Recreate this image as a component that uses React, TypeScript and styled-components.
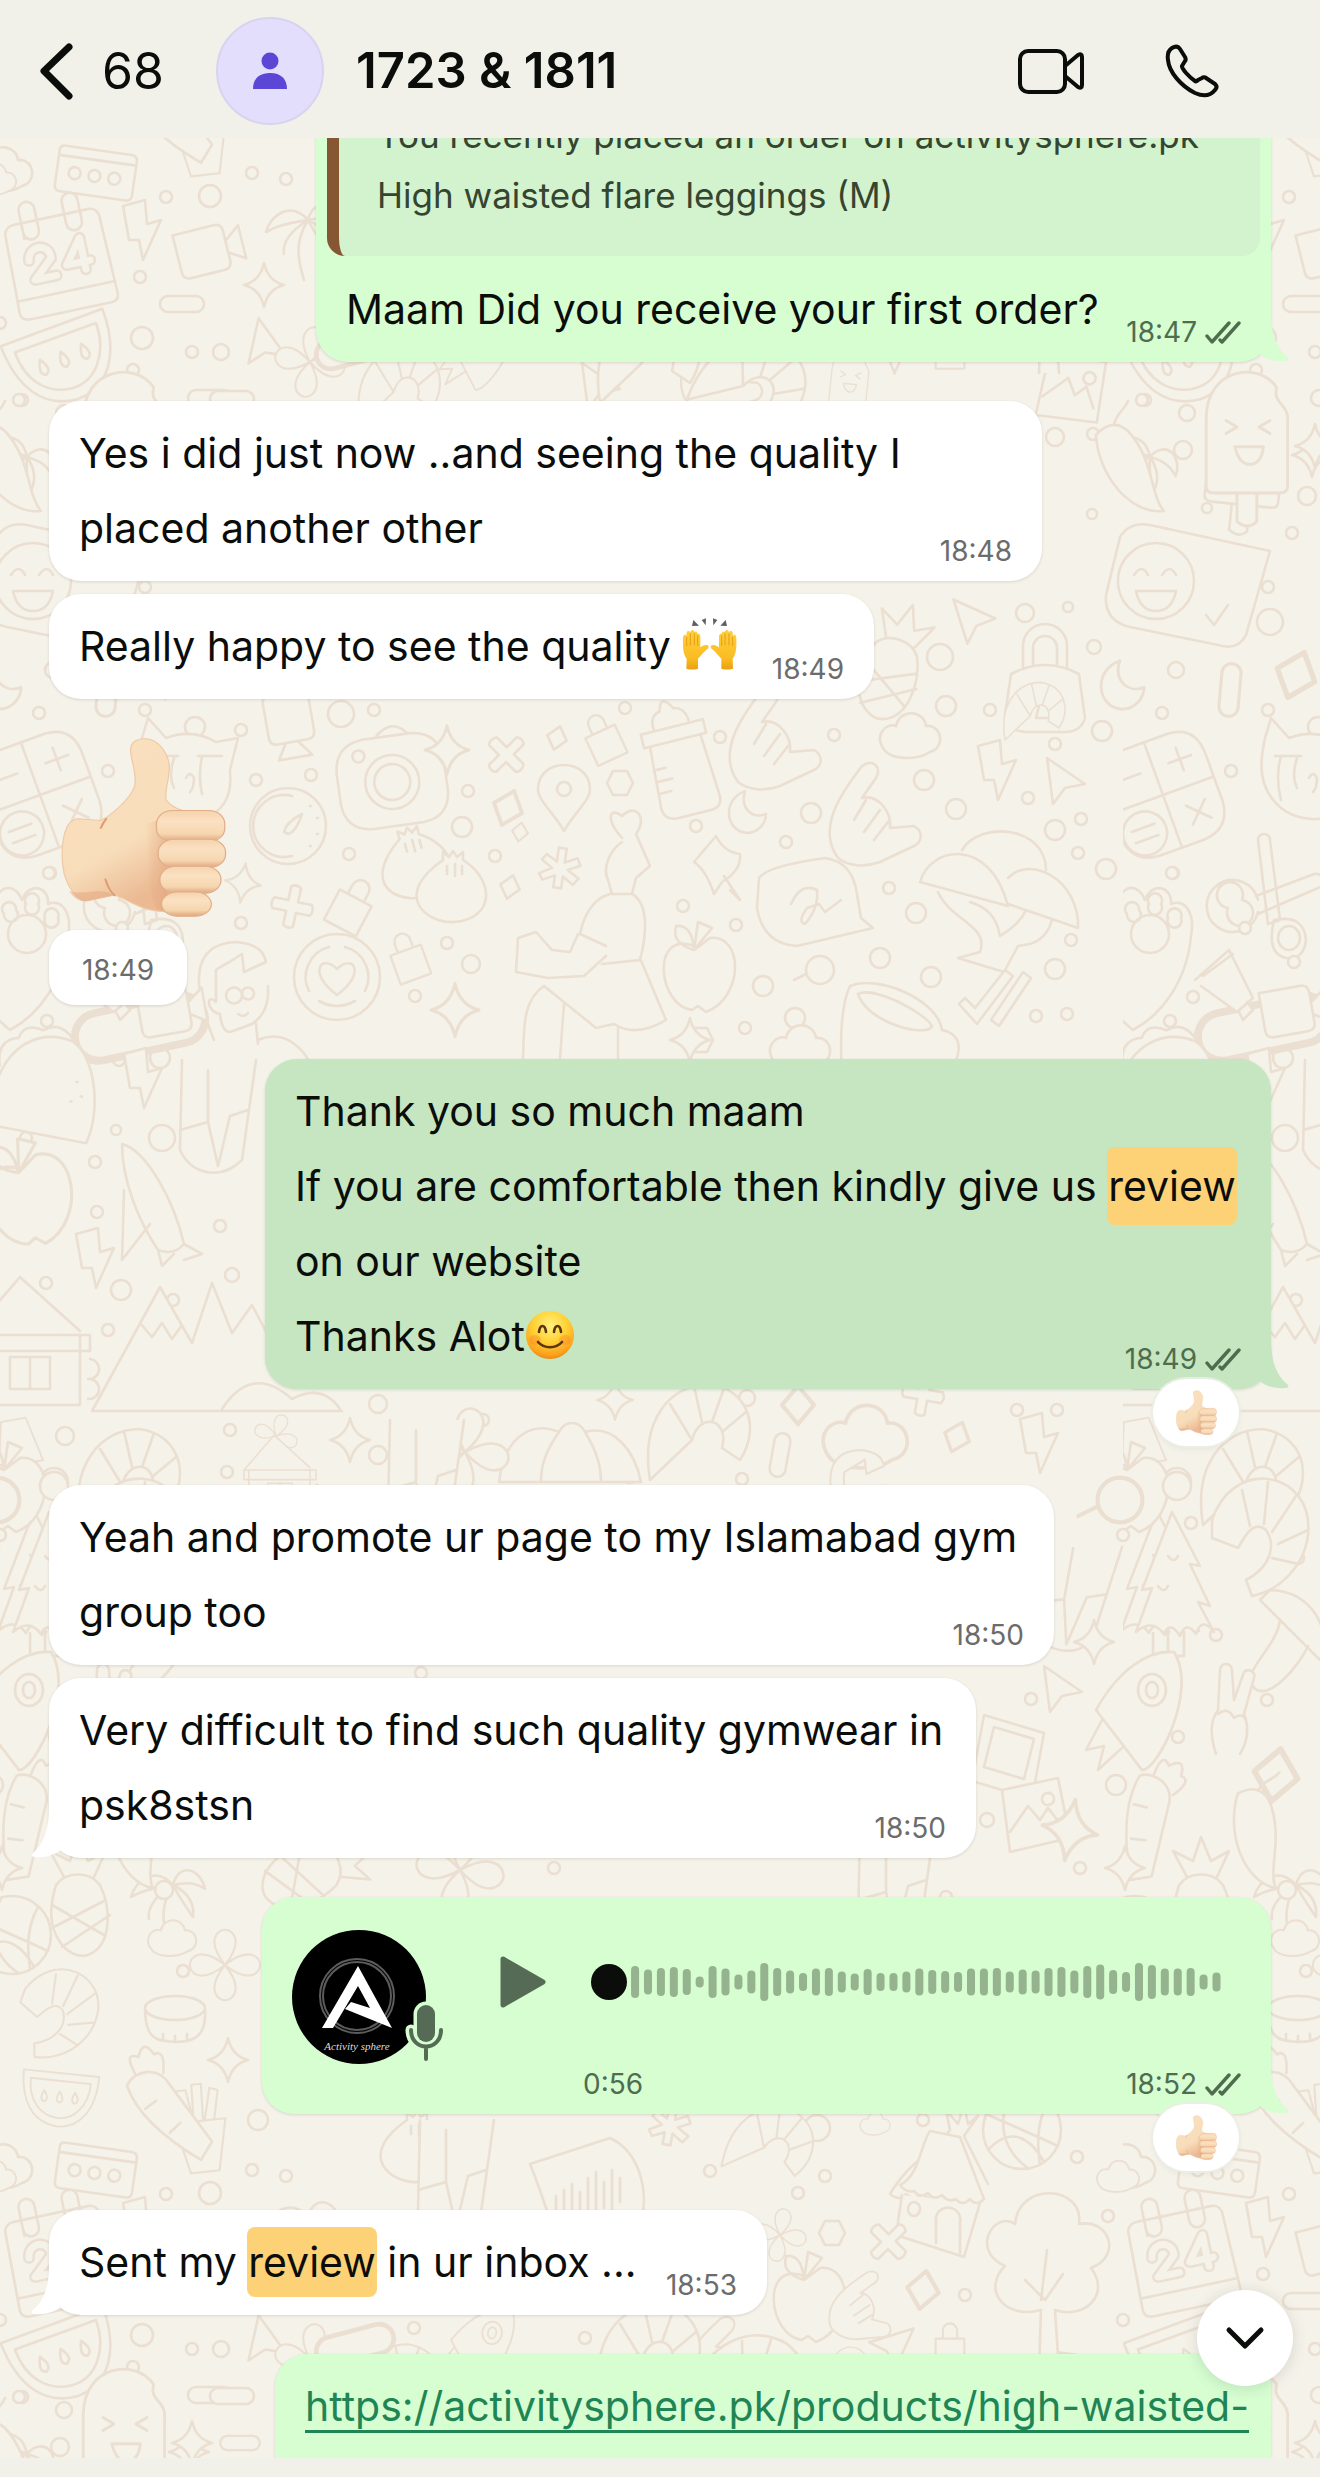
import React from "react";
import styled, { createGlobalStyle, css } from "styled-components";

const GlobalStyle = createGlobalStyle`
  *, *::before, *::after { box-sizing: border-box; }
  body { margin: 0; background: #f4f2e9; }
  button { border: 0; padding: 0; background: none; color: inherit; font: inherit; cursor: pointer; }
`;

const color = {
  wall: "#f4f2e9",
  doodle: "#ebdfd1",
  bar: "#f1f1ea",
  ink: "#0b0d0a",
  white: "#ffffff",
  green: "#d6fed1",
  selected: "#c5e6c0",
  quote: "#d3f3ce",
  mark: "#fdd176",
  link: "#1f8555",
  metaIn: "#6c6c6c",
  metaOut: "#4f6d4e",
};

/* ---------- page frame ---------- */

const Screen = styled.div`
  position: relative;
  display: flex;
  flex-direction: column;
  height: 100vh;
  overflow: hidden;
  background: ${color.wall};
  color: ${color.ink};
  font-family: Inter, "Liberation Sans", sans-serif;
`;

const Wallpaper = styled.svg`
  position: absolute;
  inset: 0;
  width: 100%;
  height: 100%;
`;

const Header = styled.header`
  position: relative;
  z-index: 1;
  flex: none;
  display: flex;
  align-items: center;
  height: 138px;
  padding: 4px 101px 0 39px;
  background: ${color.bar};
`;

const BackButton = styled.button`
  display: flex;
  align-items: center;
  gap: 28px;
  width: 177px;
  font-size: 50px;
  line-height: 60px;
`;

const Avatar = styled.div`
  display: flex;
  align-items: center;
  justify-content: center;
  width: 108px;
  height: 108px;
  border: 2px solid #d8d3ee;
  border-radius: 50%;
  background: #e4defd;
`;

const Title = styled.h1`
  flex: 1;
  margin: 0 0 0 32px;
  font-size: 49px;
  font-weight: 600;
  line-height: 60px;
`;

const HeaderActions = styled.nav`
  display: flex;
  align-items: center;
  gap: 80px;
`;

const IconButton = styled.button`
  display: flex;
`;

const Chat = styled.main`
  position: relative;
  flex: 1;
  min-height: 0;
  overflow: hidden;
`;

const MessageList = styled.div`
  display: flex;
  flex-direction: column;
  margin-top: -58px;
  padding: 0 49px;
`;

const Composer = styled.footer`
  position: relative;
  flex: none;
  height: 19px;
  background: ${color.bar};
`;

/* ---------- messages ---------- */

type Side = "in" | "out";

const Row = styled.div<{ $side: Side; $gap?: number }>`
  display: flex;
  flex-direction: column;
  align-items: ${(p) => (p.$side === "in" ? "flex-start" : "flex-end")};
  margin-top: ${(p) => p.$gap ?? 39}px;
`;

const Bubble = styled.article<{ $side: Side; $width: number; $selected?: boolean; $tall?: boolean }>`
  position: relative;
  display: flex;
  flex-direction: column;
  width: ${(p) => p.$width}px;
  max-width: 100%;
  min-height: ${(p) => (p.$tall ? 180 : 105)}px;
  padding: 15px 30px;
  border-radius: 32px;
  background: ${(p) => (p.$selected ? color.selected : p.$side === "in" ? color.white : color.green)};
  box-shadow: 0 1px 3px rgba(60, 50, 30, 0.14);
  --tail: ${(p) => (p.$selected ? color.selected : p.$side === "in" ? color.white : color.green)};
`;

const TailSvg = styled.svg<{ $side: Side }>`
  position: absolute;
  bottom: 0;
  ${(p) =>
    p.$side === "out"
      ? css`
          right: -18px;
        `
      : css`
          left: -18px;
          transform: scaleX(-1);
        `}
  fill: var(--tail);
`;

const Text = styled.p`
  margin: 0;
  font-size: 41px;
  line-height: 75px;
`;

const Mark = styled.mark<{ $pad: number }>`
  margin: 0 -1px;
  padding: ${(p) => p.$pad}px 1px;
  border-radius: 8px;
  background: ${color.mark};
  color: inherit;
`;

const Link = styled.a`
  color: ${color.link};
  white-space: nowrap;
  text-decoration: underline;
  text-decoration-thickness: 3px;
  text-underline-offset: 9px;
  text-decoration-skip-ink: none;
`;

const MetaLine = styled.div<{ $side: Side }>`
  display: flex;
  align-items: center;
  align-self: flex-end;
  gap: 8px;
  height: 30px;
  margin-top: -30px;
  color: ${(p) => (p.$side === "in" ? color.metaIn : color.metaOut)};
  font-size: 28px;
  line-height: 30px;
`;

const Quote = styled.blockquote`
  margin: 0 -19px 16px;
  padding: 10px 38px 31px;
  border-left: 12px solid #875733;
  border-radius: 18px;
  background: ${color.quote};
  color: #35452f;
  font-size: 35px;
  line-height: 60px;
`;

const TimePill = styled.div`
  display: flex;
  align-items: center;
  justify-content: center;
  width: 138px;
  height: 75px;
  margin-top: 13px;
  padding-top: 4px;
  border-radius: 26px;
  background: ${color.white};
  color: ${color.metaIn};
  box-shadow: 0 1px 3px rgba(60, 50, 30, 0.16);
  font-size: 28px;
`;

const StickerBox = styled.div`
  height: 179px;
  padding-left: 12px;
`;

const Reaction = styled.button`
  position: relative;
  display: flex;
  align-items: center;
  justify-content: center;
  width: 86px;
  height: 67px;
  margin: -10px 32px 0 0;
  border-radius: 34px;
  background: ${color.white};
  box-shadow: 0 0 0 2px rgba(235, 238, 228, 0.9), 0 3px 6px rgba(0, 0, 0, 0.06);
`;

const InlineEmoji = styled.svg`
  vertical-align: -9px;
`;

/* ---------- voice message ---------- */

const VoiceBody = styled.div`
  display: flex;
  gap: 53px;
  padding-top: 17px;
`;

const Player = styled.div`
  flex: 1;
  display: flex;
  flex-direction: column;
  gap: 34px;
`;

const Controls = styled.div`
  display: flex;
  align-items: center;
  gap: 45px;
  height: 106px;
`;

const Track = styled.div`
  flex: 1;
  display: grid;
  align-items: center;
  margin-right: 20px;
  > * {
    grid-area: 1 / 1;
  }
`;

const Seek = styled.input`
  appearance: none;
  width: 100%;
  height: 38px;
  margin: 0;
  background: transparent;
  &::-webkit-slider-thumb {
    appearance: none;
    width: 36px;
    height: 36px;
    border-radius: 50%;
    background: ${color.ink};
  }
`;

const VoiceFoot = styled.div`
  display: flex;
  justify-content: space-between;
  height: 30px;
  padding-left: 83px;
  color: ${color.metaOut};
  font-size: 28px;
  line-height: 30px;
`;

const FootMeta = styled.span`
  display: flex;
  align-items: center;
  gap: 8px;
`;

const ScrollDown = styled.button`
  position: absolute;
  right: 27px;
  bottom: 72px;
  display: flex;
  align-items: center;
  justify-content: center;
  width: 96px;
  height: 96px;
  border-radius: 50%;
  background: ${color.white};
  box-shadow: 0 2px 16px rgba(0, 0, 0, 0.12);
`;

/* ---------- small drawings ---------- */

const Tail = ({ side }: { side: Side }) => (
  <TailSvg $side={side} width="50" height="52" viewBox="0 0 50 52" aria-hidden="true">
    <path d="M32 2 C32 24 37 38 49 48 C50 50 49 51 46 51 C36 52 26 49 19 43 L8 30 L20 2 Z" />
  </TailSvg>
);

const Ticks = () => (
  <svg width="36" height="23" viewBox="0 0 36 23" fill="none" stroke="currentColor" strokeWidth="3.4" strokeLinecap="round" strokeLinejoin="round" aria-hidden="true">
    <path d="M2 15 L7 21 L24 2" />
    <path d="M15 19 L17 21 L34 2" />
  </svg>
);

const Meta = ({ side, time }: { side: Side; time: string }) => (
  <MetaLine $side={side}>
    <time>{time}</time>
    {side === "out" && <Ticks />}
  </MetaLine>
);

const ThumbsUp = ({ width, height }: { width: number; height: number }) => {
  const fingers = [
    [374, 332, 163, 94],
    [378, 419, 161, 85],
    [382, 500, 146, 82],
    [386, 578, 119, 73],
  ];
  return (
    <svg width={width} height={height} viewBox="0 0 166 180" role="img" aria-label="thumbs up">
      <defs>
        <linearGradient id="palm" x1="0" y1="0" x2="0.4" y2="1">
          <stop offset="0" stopColor="#fbe0bf" />
          <stop offset="0.7" stopColor="#f8ddbb" />
          <stop offset="1" stopColor="#ebba93" />
        </linearGradient>
        <linearGradient id="finger" x1="0" y1="0" x2="0" y2="1">
          <stop offset="0" stopColor="#f5d3ad" />
          <stop offset="0.35" stopColor="#fbe1c2" />
          <stop offset="0.75" stopColor="#f6d6b0" />
          <stop offset="1" stopColor="#dfa67f" />
        </linearGradient>
        <linearGradient id="fold" x1="0" y1="0" x2="1" y2="0">
          <stop offset="0" stopColor="#e5a67d" stopOpacity="0" />
          <stop offset="1" stopColor="#dd9d77" stopOpacity="0.5" />
        </linearGradient>
      </defs>
      <g transform="scale(0.421 0.333) translate(-147 -113)">
        <path
          d="M188 357 L240 362 C262 350 310 300 322 258 C328 220 312 175 312 150 C312 125 328 114 348 115 C375 116 398 150 404 190 C408 230 392 270 397 300 C410 322 430 330 450 338 L450 640 C400 640 370 637 345 627 C310 612 290 590 272 588 L207 605 C190 608 165 575 153 520 C145 470 148 400 165 372 C172 362 180 357 188 357 Z"
          fill="url(#palm)"
          stroke="#efc9a3"
          strokeWidth="3"
        />
        <path d="M345 375 C362 440 345 560 374 632 L400 638 L400 350 Z" fill="url(#fold)" />
        <path d="M252 540 C258 565 264 578 274 588 M241 385 C244 376 247 368 254 357" fill="none" stroke="#dc9d72" strokeWidth="5" strokeLinecap="round" />
        <path d="M165 575 C178 598 190 608 207 605 L272 588 C240 560 200 590 165 575 Z" fill="#e0a27a" opacity="0.45" />
        {fingers.map(([x, y, w, h]) => (
          <rect key={y} x={x} y={y} width={w} height={h} rx="38" ry="40" fill="url(#finger)" stroke="#e2ae87" strokeWidth="3" />
        ))}
      </g>
    </svg>
  );
};

const RaisedHands = () => (
  <InlineEmoji width="56" height="52" viewBox="66 38 168 156" role="img" aria-label="raised hands">
    <defs>
      <linearGradient id="hands" x1="0" y1="0" x2="0" y2="1">
        <stop offset="0" stopColor="#ffcf3d" />
        <stop offset="0.7" stopColor="#fbbd22" />
        <stop offset="1" stopColor="#e9a013" />
      </linearGradient>
      <g id="hand">
        <path
          d="M79 190 L80 160 C70 145 68 130 69 98 C69 86 78 86 79 94 L80 82 C81 74 90 76 91 82 C92 72 102 72 103 80 C106 76 113 79 113 86 C118 84 121 89 121 94 L121 126 C128 120 136 117 143 120 C149 124 145 129 141 132 C131 140 122 152 114 160 L114 190 Q97 195 79 190 Z"
          fill="url(#hands)"
        />
        <path d="M80 94 V122 M91 84 V120 M103 84 V120 M113 90 V122" stroke="#dd9510" strokeWidth="2.5" fill="none" />
      </g>
    </defs>
    <g fill="#5f6062">
      <path d="M100 44 L117 61 L96 62 Z M125 44 L138 39 L137 60 Z M159 39 L172 44 L160 60 Z M197 44 L201 62 L181 61 Z" />
    </g>
    <use href="#hand" />
    <use href="#hand" transform="translate(298 0) scale(-1 1)" />
  </InlineEmoji>
);

const Smile = () => (
  <InlineEmoji width="50" height="50" viewBox="0 0 50 50" role="img" aria-label="smiling face">
    <defs>
      <radialGradient id="face" cx="0.5" cy="0.3" r="0.72">
        <stop offset="0" stopColor="#fff27a" />
        <stop offset="0.5" stopColor="#ffd035" />
        <stop offset="0.85" stopColor="#fba21c" />
        <stop offset="1" stopColor="#e98411" />
      </radialGradient>
    </defs>
    <circle cx="25" cy="25" r="24" fill="url(#face)" />
    <ellipse cx="10" cy="30" rx="6" ry="5" fill="#fb7a2c" opacity="0.35" />
    <ellipse cx="40" cy="30" rx="6" ry="5" fill="#fb7a2c" opacity="0.35" />
    <g fill="none" stroke="#5b3410" strokeWidth="2.6" strokeLinecap="round">
      <path d="M14 22 C15 14 20 14 21 22 M29 22 C30 14 35 14 36 22" />
      <path d="M13 32 C19 39 31 39 37 32" />
    </g>
  </InlineEmoji>
);

const VoiceAvatar = () => (
  <svg width="155" height="136" viewBox="0 0 155 136" role="img" aria-label="Voice message sender">
    <circle cx="67" cy="68" r="67" fill="#000" />
    <g fill="none" stroke="#5c5c5c" strokeWidth="2">
      <circle cx="65" cy="67" r="37" />
      <circle cx="65" cy="67" r="34" />
    </g>
    <path d="M66 37 L100 99 L53 80 L59 73 L78 79 L66 57 L41 99 L30 99 Z" fill="#fff" />
    <text x="65" y="121" textAnchor="middle" fill="#ddd" fontFamily="'Liberation Serif', serif" fontStyle="italic" fontSize="11">
      Activity sphere
    </text>
    <g fill="none" strokeLinecap="round">
      <path d="M134 85 V104 M119 101 C119 122 149 122 149 101" stroke={color.green} strokeWidth="11" />
      <path d="M134 85 V104" stroke={color.green} strokeWidth="25" />
      <path d="M134 85 V104" stroke="#566b55" strokeWidth="18" />
      <path d="M119 101 C119 123 149 123 149 101 M134 118 V130" stroke="#566b55" strokeWidth="4" />
    </g>
  </svg>
);

const levels = [
  32, 25, 28, 30, 26, 11, 32, 27, 15, 23, 38, 28, 23, 18, 27, 28, 21, 17, 26, 18, 18, 21, 27, 24, 22, 20, 27, 27, 28, 21,
  25, 23, 28, 30, 23, 32, 35, 24, 20, 38, 34, 27, 27, 28, 15, 19,
];

const Waveform = () => (
  <svg width="100%" height="38" viewBox="0 0 629 38" preserveAspectRatio="none" aria-hidden="true">
    {levels.map((h, i) => (
      <rect key={i} x={40 + i * 12.9} y={19 - h / 2} width="8" height={h} rx="4" fill="#96b38f" />
    ))}
  </svg>
);

/* ---------- wallpaper doodles ---------- */

type Spot = [number, number, number];

const dots: Spot[] = [
  [166, 197, 6], [210, 196, 11], [252, 173, 6], [140, 277, 6], [142, 338, 11], [192, 352, 6], [221, 352, 8], [133, 370, 6],
  [22, 400, 6], [60, 380, 5], [1187, 413, 8], [1142, 400, 6], [1055, 437, 9], [1093, 434, 6], [1183, 450, 9], [1207, 508, 5],
  [1092, 514, 5], [1292, 533, 6], [1307, 496, 9], [1268, 587, 6], [1270, 622, 13], [1025, 613, 9], [1068, 607, 5],
  [940, 657, 13], [1094, 647, 7], [1176, 670, 8], [39, 713, 6], [145, 710, 6], [195, 727, 10], [241, 730, 6], [341, 714, 13],
  [374, 710, 6], [108, 771, 6], [256, 780, 6], [311, 775, 6], [468, 791, 6], [462, 827, 10], [349, 854, 6], [495, 856, 6],
  [50, 873, 6], [241, 923, 6], [447, 943, 6], [471, 964, 9], [415, 996, 6], [47, 1021, 6], [625, 708, 6], [720, 737, 6],
  [834, 735, 6], [946, 706, 10], [990, 710, 6], [1102, 731, 10], [1055, 744, 6], [811, 813, 10], [924, 780, 10],
  [956, 809, 10], [1028, 798, 6], [1081, 819, 6], [1055, 830, 10], [1078, 853, 6], [1106, 869, 10], [696, 826, 6],
  [786, 842, 6], [889, 888, 6], [916, 913, 10], [683, 906, 6], [736, 925, 6], [1071, 940, 6], [880, 958, 10], [931, 977, 10],
  [1055, 969, 10], [763, 986, 10], [795, 1018, 10], [745, 1028, 6], [1036, 1016, 6], [1067, 1014, 6], [1172, 873, 6],
  [1245, 928, 6], [1294, 962, 6], [1193, 997, 6], [119, 1060, 6], [160, 1058, 10], [116, 1130, 5], [162, 1138, 13],
  [26, 1138, 6], [95, 1162, 6], [97, 1212, 6], [220, 1226, 6], [232, 1275, 7], [46, 1283, 6], [121, 1290, 10], [173, 1300, 6],
  [108, 1330, 6], [378, 1404, 9], [378, 1455, 9], [483, 1420, 6], [747, 1398, 8], [1017, 1410, 6], [1057, 1410, 6],
  [65, 1436, 9], [230, 1430, 6], [54, 1482, 14], [227, 1472, 6], [630, 1475, 8], [742, 1479, 6], [1177, 1486, 14],
  [1191, 1523, 6], [1123, 1535, 6], [1298, 1558, 6], [1216, 1635, 6], [1031, 1699, 6], [1267, 1700, 6], [1178, 1737, 6],
  [421, 1673, 6], [1116, 1785, 10], [987, 1820, 7], [554, 1868, 6], [1080, 1868, 6], [284, 1894, 9], [258, 2120, 10],
  [286, 2176, 6], [1287, 1890, 9], [1306, 1971, 6], [923, 2120, 6], [817, 2128, 13], [1077, 2157, 6], [946, 1897, 6],
  [710, 2171, 6], [798, 2193, 6], [825, 2176, 6], [1108, 2216, 6], [965, 2295, 6], [1123, 2320, 6], [414, 2328, 6], [585, 2338, 6],
];

const calendarDate = "M-32 -8 C-30 -24 -8 -22 -10 -6 L-30 12 H-8 M22 12 V-20 L4 4 H28";

const shapes = {
  sparkle: "M0 -22 Q4 -4 20 0 Q4 4 0 22 Q-4 4 -20 0 Q-4 -4 0 -22 Z",
  bolt: "M-14 -26 L8 -32 L10 -8 L24 -12 L6 28 L2 8 L-8 8 Z",
  cursor: "M-18 -22 L20 4 L0 8 L-12 24 Z",
  cross: "M-5 -20 Q0 -24 5 -20 V-6 H19 Q23 0 19 5 H5 V19 Q0 23 -5 19 V5 H-19 Q-23 0 -19 -6 H-5 Z",
  square: "M0 -12 L10 0 L0 12 L-10 0 Z",
  hex: "M-13 0 L-7 -12 H7 L13 0 L7 12 H-7 Z",
  moon: "M-2 -22 C-26 -14 -24 20 0 22 C12 22 20 12 20 2 C6 8 -8 -4 -2 -22 Z",
  cloud: "M-24 14 C-38 -2 -24 -16 -14 -12 C-10 -30 14 -28 16 -12 C32 -14 36 10 20 14 C8 22 -14 22 -24 14 Z",
  pin: "M0 34 C-10 16 -26 4 -26 -8 C-26 -40 26 -40 26 -8 C26 4 10 16 0 34 Z M7 -8 A7 7 0 1 0 -7 -8 A7 7 0 1 0 7 -8",
  lock: "M-18 -8 L18 -8 L18 26 L-18 26 Z M-9 -8 V-18 A9 9 0 0 1 9 -18 V-8",
  bar: "M-14 -8 H14 A8 8 0 0 1 14 8 H-14 A8 8 0 0 1 -14 -8 Z",
  calendar: "M-48 -38 Q-46 -46 -38 -46 H38 Q46 -46 48 -38 L50 42 Q50 50 42 50 H-40 Q-50 50 -50 42 Z M-30 -30 V-58 A8 8 0 0 1 -14 -58 V-36 A8 8 0 0 1 -30 -36 M14 -36 V-58 A8 8 0 0 1 30 -58 V-36 A8 8 0 0 1 14 -36 M-50 30 H50",
  tissue: "M-38 -18 Q-38 -22 -32 -22 H34 Q40 -22 40 -16 V18 Q40 24 34 24 H-32 Q-38 24 -38 18 Z M-36 -12 H38 M-14 4 A6 6 0 1 0 -26 4 A6 6 0 1 0 -14 4 M6 4 A6 6 0 1 0 -6 4 A6 6 0 1 0 6 4 M26 4 A6 6 0 1 0 14 4 A6 6 0 1 0 26 4",
  movie: "M-28 -22 H14 Q22 -22 22 -14 V16 Q22 24 14 24 H-20 Q-28 24 -28 16 Z M22 -4 L38 -16 V18 L22 8",
  melon: "M-56 -20 L52 -28 C56 20 36 50 4 52 C-32 52 -52 24 -56 -20 Z M-44 -10 L42 -16 C44 16 26 40 2 40 C-24 40 -42 20 -44 -10 M-22 4 q-6 14 2 16 q8 -4 -2 -16 M0 2 q-6 14 2 16 q8 -4 -2 -16 M22 0 q-6 14 2 16 q8 -4 -2 -16",
  palm: "M4 40 C-4 14 -4 0 8 -20 M8 -20 C-10 -40 -30 -24 -34 -8 C-20 -16 -4 -18 8 -20 C14 -44 36 -36 40 -16 C28 -24 18 -22 8 -20 C20 -14 30 -4 28 12 C20 0 14 -8 8 -20 C-8 -10 -18 2 -16 14",
  fries: "M-30 -20 L-16 44 H20 L34 -20 M-20 -20 L-24 -60 L-12 -60 L-6 -20 M-6 -20 L-4 -66 H8 L6 -20 M8 -20 L18 -60 L28 -56 L20 -20 M-30 -20 H34",
  icepop: "M-38 44 V-18 C-38 -64 10 -70 26 -46 C22 -30 38 -32 36 -14 V44 Q36 50 28 50 H-30 Q-38 50 -38 44 Z M-10 50 V76 Q0 84 8 76 V50 M-20 -16 l10 6 l-10 6 M20 -16 l-10 6 l10 6 M-12 8 H14 Q12 24 2 24 Q-8 24 -12 8",
  chili: "M-24 -30 C-22 10 10 50 44 46 C30 30 34 -6 8 -34 Q-8 -48 -24 -30 Z M-6 -40 C-4 -52 4 -54 8 -64",
  joyCard: "M-60 -48 Q-50 -64 -30 -60 L90 -34 L66 50 Q58 66 38 60 L-50 42 Q-76 36 -74 10 Z M14 -4 A38 38 0 1 0 -62 -4 A38 38 0 1 0 14 -4 M-46 -10 q8 -12 14 0 M-18 -10 q8 -12 14 0 M-44 6 H-4 Q-8 26 -24 26 Q-40 26 -44 6 M26 30 l8 10 l14 -20",
  padlock: "M-34 -16 Q0 -34 34 -16 L40 28 Q36 42 20 42 H-20 Q-40 40 -40 24 Z M-22 -22 V-44 A22 22 0 0 1 22 -44 V-22 M-12 -26 V-42 A12 12 0 0 1 12 -42 V-26 M-5 12 A9 9 0 1 1 5 12 L9 28 H-9 Z",
  calculator: "M-20 -56 H26 Q54 -54 54 -24 V26 Q52 54 24 56 H-24 Q-52 54 -54 26 V-24 Q-52 -54 -20 -56 Z M0 -56 V56 M-54 0 H54 M16 -28 H40 M28 -40 V-16 M-40 -28 H-14 M18 18 L38 38 M38 18 L18 38 M-8 30 A22 22 0 1 0 -52 30 A22 22 0 1 0 -8 30 M-42 24 H-18 M-42 36 H-18",
  camera: "M-24 -44 H24 Q52 -42 54 -14 V18 Q52 44 26 46 H-26 Q-52 44 -54 18 V-14 Q-52 -42 -24 -44 Z M-10 -45 Q8 -62 22 -44 M27 2 A27 27 0 1 0 -27 2 A27 27 0 1 0 27 2 M18 2 A18 18 0 1 0 -18 2 A18 18 0 1 0 18 2 M-24 -28 A6 6 0 1 0 -36 -28 A6 6 0 1 0 -24 -28",
  gauge: "M38 0 A38 38 0 1 0 -38 0 A38 38 0 1 0 38 0 M4 -30 A31 31 0 1 0 4 30 M-4 6 Q-2 -4 14 -12 Q8 6 0 8 Z M22 -20 h1 M29 -8 h1 M29 8 h1 M22 20 h1",
  bun: "M-8 -30 C-60 6 -24 34 4 32 C44 28 44 -10 12 -30 L12 -38 L6 -33 L2 -39 L-2 -33 L-8 -38 Z M-4 -24 v8 M4 -26 v12 M11 -24 v8",
  asterisk: "M-4 -20 H4 L4 -6 L16 -12 L20 -5 L8 1 L20 8 L15 15 L4 8 V20 H-4 V8 L-16 14 L-20 8 L-8 1 L-19 -6 L-15 -12 L-4 -6 Z",
  heartDisc: "M43 0 A43 43 0 1 0 -43 0 A43 43 0 1 0 43 0 M0 18 C-30 -4 -16 -24 0 -8 C16 -24 30 -4 0 18 M-28 14 A31 31 0 0 1 -8 -30 M28 14 A31 31 0 0 0 8 -30 M-18 24 Q0 34 18 24",
  catFace: "M-46 -40 L-40 -60 L-22 -40 Q4 -50 28 -36 L50 -40 L42 -8 C48 50 -8 48 -30 30 C-56 8 -50 -22 -46 -40 Z M-36 -22 h26 M-30 -22 q-6 20 0 44 M-14 -20 q-6 18 0 30 M10 -22 h24 M14 -22 q-4 20 0 38 M-2 0 q4 -8 8 0 q0 10 -4 14",
  paw: "M-56 24 C-30 4 -30 -28 -22 -46 C-12 -58 -2 -50 2 -40 C10 -60 30 -52 28 -36 C44 -42 52 -24 48 -4 C44 40 20 74 -10 90 C-34 70 -50 50 -56 24 Z M26 -6 A19 19 0 1 0 -12 -6 A19 19 0 1 0 26 -6 M-4 -30 a7 7 0 1 0 -12 4 a7 7 0 1 0 12 -4 M18 -36 a7 7 0 1 0 -12 0 a7 7 0 1 0 12 0 M38 -22 a7 7 0 1 0 -13 0 a7 7 0 1 0 13 0",
  reader: "M-22 48 C-44 -6 -46 -48 0 -50 C22 -48 28 -40 30 -30 L8 -20 L6 -38 C-6 -30 -14 -26 -20 -22 L-20 10 C-30 0 -30 20 -16 22 Q-14 40 -6 40 Q0 38 16 32 Q34 20 32 -6 M-10 4 a8 8 0 1 0 16 -1 a8 8 0 1 0 -16 1 M6 2 a6 6 0 1 0 12 -1 a6 6 0 1 0 -12 1 M2 22 q6 4 10 -1 M20 32 L22 52 M22 48 C50 36 70 58 78 80",
  dancer: "M8 -70 C-8 -88 -6 -102 8 -92 C22 -106 34 -90 22 -74 L36 -42 L22 -30 M8 -66 C-4 -58 -12 -40 -6 -28 L-2 -14 H18 L22 -30 M-4 -14 C-20 -10 -30 6 -34 26 L-8 38 M-36 26 L-44 44 L-62 42 L-78 24 L-96 30 L-98 64 L-66 70 L-30 68 L-8 48 M18 -14 C36 -4 32 30 26 52 L-12 56 M26 50 L52 112 Q22 130 0 116 L-18 120 L-70 78 M-70 78 C-96 96 -88 130 -92 160 M-50 96 L-54 150 M4 120 V152",
  rockHand: "M-34 30 C-56 0 -30 -36 -10 -62 C2 -70 10 -60 4 -50 L-10 -30 C6 -34 20 -16 18 0 L42 -2 C52 4 50 14 42 18 L8 34 C-8 40 -24 38 -34 30 Z M-18 -8 L-6 -28 M-8 4 L8 -18 M2 12 L16 -6",
  pushpin: "M-22 -6 L0 -32 Q8 -16 24 -14 Q26 2 6 14 L-2 26 Q-10 2 -22 -6 Z M8 8 L24 32 L14 22",
  note: "M-56 -26 Q-48 -38 10 -46 Q38 -42 42 -10 L46 14 L58 24 L-18 42 Q-52 40 -58 4 Z M-24 0 Q-14 -22 2 -14 Q4 4 -10 20 Q-18 18 -8 4 L4 0 L10 8 L26 -4",
  mushrooms: "M-80 -4 C-70 -40 -10 -50 8 20 Z M-38 -36 C-20 -66 46 -60 46 -16 M8 -8 C30 -32 80 -6 78 42 L8 18 M-62 6 C-50 34 -10 40 -20 66 L-42 72 L4 86 L18 60 L30 58 C44 54 50 42 52 34 M-30 16 C-12 22 -4 30 0 50 Q20 38 26 24",
  apple: "M-6 -24 C-50 -40 -42 36 -8 40 L-2 36 L6 42 C44 28 44 -36 10 -32 L-6 -20 L-2 -48 L12 -42 L-6 -20 C-26 -26 -26 -36 -24 -44 Q-8 -46 -6 -20",
  lens: "M14 0 A14 14 0 1 0 -14 0 A14 14 0 1 0 14 0 M-14 4 L-26 10",
  mug: "M-46 60 Q-50 -10 -38 -34 C-10 -46 50 -20 54 10 Q74 14 70 34 L60 70 M-30 -26 C-14 -34 36 -8 44 6 C40 18 -20 4 -30 -26",
  checks: "M-36 4 L-30 -2 L-20 8 L10 -30 L18 -24 L-18 24 Z M-4 20 L28 -28 L36 -22 L4 26 Z",
  scissors: "M-12 -60 a6 6 0 0 1 12 0 L10 20 L-2 24 Z M-14 -4 L44 -26 a6 6 0 0 1 4 14 L-12 14 M-12 0 A26 26 0 1 0 -12 12 M-28 0 a13 13 0 1 0 -14 8 a13 13 0 1 0 14 -8 M4 20 Q34 14 36 40 Q34 60 16 58 Q-4 54 4 20 M30 38 a11 12 0 1 0 -22 0 a11 12 0 1 0 22 0",
  tube: "M-30 0 L4 -30 L28 18 L12 32 L-24 6 M-22 -4 L8 -26 M14 32 l4 8 l10 -10 l-6 -8",
  taco: "M-50 46 C-64 -10 -30 -60 20 -46 C44 -34 56 20 44 54 Z M-50 -14 Q-56 -40 -34 -44 Q-30 -60 -10 -54 Q6 -66 22 -46 M28 -6 h1 M34 8 h1 M24 14 h1",
  popsicle: "M-40 -50 L-42 40 C-30 66 0 70 20 50 L34 -50 M-42 20 L-14 12 L-4 56 L8 6 L26 0 M-14 12 V-40",
  squid: "M-28 -56 C-4 -50 24 0 34 44 Q24 56 8 50 C-12 20 -28 -20 -28 -56 Z M-26 -10 L-28 60 L0 24 M34 44 L52 54 L34 60 M8 50 L12 66 L24 54",
  hut: "M-60 0 L-10 -58 L50 -4 M-52 0 V70 H50 V0 M-60 0 H60 V16 H-60 Z M-20 22 H20 V54 H-20 Z M0 22 V54 M-60 54 a10 10 0 1 0 2 20 M60 24 a10 10 0 1 1 -2 20 M60 44 a10 10 0 1 1 -2 20",
  mountain: "M-120 68 L-52 -56 L-20 0 L0 -60 L20 -10 L40 -38 L60 0 M-120 68 H130 M10 66 Q40 20 80 56 Q110 40 128 66 M-72 -20 L-60 -6 L-50 -20 L-40 -4 L-30 -18",
  shell: "M-50 40 C-60 -20 -30 -56 10 -56 C50 -50 60 -10 40 20 L22 8 C30 -20 0 -30 -8 0 Z M-30 -36 L-8 0 M-6 -54 L2 -18 M24 -52 L12 -18 M46 -28 L22 -8",
  cap: "M-76 50 C-70 0 -40 -10 -16 0 C-10 -12 4 -12 10 0 C40 -8 60 20 66 50 Z M-16 0 C-30 20 -34 34 -34 50 M10 0 C22 20 26 34 26 50",
  fir: "M0 -64 L28 -10 L18 -12 L38 30 L26 26 L42 56 Q30 40 24 58 Q14 44 8 60 Q-2 44 -8 58 Q-20 42 -36 56 L-20 12 L-30 14 Z M-4 58 V80 H12 V56 M-4 -20 q6 8 10 0 M-14 10 q6 8 10 0",
  shrimp: "M-50 -10 C-30 -70 40 -60 46 -10 C50 30 20 60 -10 66 L-16 50 C10 36 14 14 4 0 C-8 -10 -16 4 -24 18 L-50 8 Z M-20 -40 L-12 -4 M6 -48 L2 -6 M34 -34 L10 2 M46 0 L16 14 M36 34 L10 28",
  toadstool: "M-20 -50 C20 -50 44 -10 30 20 L-30 -40 Z M-10 -20 C-14 10 -50 30 -36 48 C-20 62 10 24 18 6",
  rocket: "M36 -58 C60 -20 20 60 4 60 L-42 0 C-20 -40 10 -60 36 -58 Z M28 -20 a14 16 0 1 0 -28 0 a14 16 0 1 0 28 0 M20 -20 a6 8 0 1 0 -12 0 a6 8 0 1 0 12 0 M-36 10 L-52 40 L-34 36 L-40 60 L-14 36",
  peace: "M-16 44 C-24 20 -20 8 -14 0 L-12 -40 a6 6 0 0 1 12 0 L2 -10 L12 -38 a6 6 0 0 1 10 6 L12 4 Q20 24 8 44 M-14 4 q10 -8 16 4 q8 -6 12 2",
  photo: "M-26 -40 L34 -22 L22 44 L-38 26 Z M-16 -28 L24 -16 L14 24 L-26 12 Z",
  picture: "M-30 -22 L26 -34 L38 26 L-22 40 Z M-22 20 L-4 -6 L8 8 L16 -4 L30 14 M22 -14 a6 6 0 1 0 -12 2 a6 6 0 1 0 12 -2",
  bowl: "M-30 -12 a30 12 0 1 0 60 0 a30 12 0 1 0 -60 0 C-30 24 -14 20 0 22 C20 22 32 16 30 -12 M-12 20 v-6 M0 22 v-6 M12 20 v-6",
  carrot: "M-30 -20 C-20 -34 4 -34 12 -14 L44 50 L30 66 Q-24 20 -30 -20 Z M-20 -30 Q-28 -54 -14 -46 Q-6 -64 2 -46 Q14 -50 8 -26 M-16 6 L-4 0 M4 34 L16 26",
  ball: "M39 0 A39 39 0 1 0 -39 0 A39 39 0 1 0 39 0 M-36 -16 Q10 4 36 16 M-10 -38 C-26 -10 -20 20 6 38 M-34 20 C-10 -6 10 10 22 32 M26 -28 Q12 -4 18 34",
  wing: "M-60 44 C-40 10 -20 6 0 -20 L-4 -40 L8 -26 L14 -46 L18 -26 L28 -34 L14 -14 L38 34 M-60 44 q10 8 16 0 q10 8 16 0 q10 8 16 0",
  bag: "M-60 -28 L20 -54 C50 -40 60 0 50 34 L-20 60 C-40 40 -44 10 -60 -28 Z M-34 4 V24 M-26 -2 V34 M-18 -8 V40 M-10 0 V26 M-2 -14 V34 M6 -20 V24 M14 -10 V16 M22 -22 V18 M30 -14 V10",
  shop: "M-40 -10 C-20 -20 -20 -50 -10 -64 L20 -58 L44 4 q-8 8 -14 0 q-8 8 -14 0 q-8 4 -14 -4 q-8 6 -14 -2 q-8 6 -14 -2 q-8 2 -14 -6 M-38 0 L-44 40 L24 62 L40 8 M-4 48 V22 a12 12 0 0 1 24 6 V58 M-20 14 a6 7 0 1 0 -12 0 a6 7 0 1 0 12 0",
  tree: "M-6 100 L-4 40 C-40 50 -64 20 -40 -4 C-76 -20 -50 -60 -30 -46 C-26 -90 40 -84 34 -46 C64 -52 78 -14 46 -2 C66 24 40 50 10 40 L14 100 M-20 10 L0 30 L18 4 M-4 30 L2 -20",
  pineapple: "M-24 -10 C-40 40 -10 66 8 60 C34 50 30 10 20 -10 C10 -24 -14 -24 -24 -10 Z M-16 -18 L-30 -44 L-10 -34 L-2 -58 L8 -34 L26 -44 L14 -18 M-28 10 L24 40 M-30 34 L24 6 M-18 52 L30 20",
  bottle: "M-26 -20 L-30 44 Q-28 56 -16 56 H18 Q30 56 30 44 L26 -20 M-32 -34 H32 V-20 H-32 Z M-18 -34 Q-20 -50 -8 -52 Q-4 -70 6 -52 Q18 -50 18 -34 M-28 4 H-16 M-28 16 H-12 M-28 28 H-16",
  flower: "M0 0 C-24 -30 -10 -44 0 -44 C10 -44 24 -30 0 0 C30 -24 44 -10 44 0 C44 10 30 24 0 0 C24 30 10 44 0 44 C-10 44 -24 30 0 0 C-30 24 -44 10 -44 0 C-44 -10 -30 -24 0 0",
};

type Doodle = [keyof typeof shapes, number, number, number?, number?];

const doodles: Doodle[] = [
  ["tissue", 95, 172, 8], ["calendar", 60, 262, -12], ["bolt", 137, 232], ["movie", 205, 250, -14], ["sparkle", 264, 285],
  ["bar", 182, 304], ["melon", 60, 350, -16], ["cursor", 268, 345, 20], ["fries", 200, 140, -6, 0.8], ["palm", 300, 240],
  ["cloud", 2, 172], ["flower", 310, 362, 10, 0.8], ["shell", 400, 392, 0, 0.8], ["cursor", 600, 385], ["rockHand", 720, 378, 10, 0.9],
  ["bar", 210, 398], ["shell", 750, 390, 30], ["icepop", 1247, 455, 6], ["icepop", 850, 380, 6, 0.5], ["chili", 1120, 465], ["joyCard", 1180, 585],
  ["picture", 1070, 385, 20], ["padlock", 1045, 690], ["moon", 1122, 685, 0, 1.1], ["bar", 1230, 690, 95, 1.2], ["cursor", 975, 618, -10],
  ["pineapple", 895, 660, 20], ["square", 1296, 675, 20, 2], ["sparkle", 1312, 455], ["palm", 10, 470, 30], ["calculator", 40, 795, -20],
  ["catFace", 188, 778], ["gauge", 288, 826], ["camera", 392, 780, -8], ["sparkle", 447, 750, 0, 1.1], ["cross", 506, 755, 45],
  ["square", 557, 738, 15], ["lock", 603, 738, -25, 0.9], ["pin", 564, 797], ["hex", 620, 783], ["square", 508, 808, 20, 1.5],
  ["square", 520, 832, 10, 0.8], ["bun", 415, 866, -15], ["bun", 451, 890], ["asterisk", 560, 868, 8], ["sparkle", 243, 883, 8, 0.9],
  ["cross", 292, 907, 12], ["lock", 352, 905, 28], ["square", 510, 887, 15], ["heartDisc", 337, 977], ["lock", 408, 957, -20, 0.9],
  ["sparkle", 455, 1010, 0, 1.2], ["reader", 236, 992], ["bar", 140, 1028, -12, 3], ["paw", 20, 940], ["dancer", 614, 908],
  ["movie", 290, 720, 80], ["bottle", 680, 760, -14], ["rockHand", 772, 752], ["rockHand", 872, 828], ["cloud", 910, 738],
  ["bolt", 992, 772], ["cursor", 1065, 780], ["moon", 747, 812, 0, 0.95], ["pushpin", 716, 868], ["note", 815, 904], ["mushrooms", 1000, 886],
  ["apple", 700, 970], ["lens", 820, 970], ["mug", 888, 1020], ["checks", 995, 1000], ["scissors", 147, 900], ["tube", 1225, 980],
  ["movie", 1290, 1010, -10], ["shell", 1035, 716, 0, 0.6], ["hex", 700, 1040], ["sparkle", 690, 1040], ["cloud", 800, 1050],
  ["taco", 48, 1085, 6], ["bolt", 138, 1080], ["popsicle", 222, 1110], ["squid", 150, 1200], ["apple", 30, 1195, -10, 1.2], ["bolt", 90, 1260],
  ["hut", 30, 1335], ["mountain", 212, 1343], ["flower", 276, 1436, 20, 0.5], ["sparkle", 350, 1440], ["cap", 575, 1432],
  ["shell", 700, 1440], ["sparkle", 615, 1400, 0, 0.9], ["square", 798, 1405, 0, 1.6], ["cross", 923, 1395, 10], ["square", 957, 1437, 20, 1.3],
  ["cloud", 865, 1440, 0, 1.4], ["bolt", 1034, 1445], ["flower", 465, 1452, 10], ["fries", 20, 1450, 170, 0.7],
  ["bar", 780, 1455, 100], ["fir", 34, 1575], ["apple", 10, 1490], ["shell", 130, 1485], ["hut", 280, 1470, 0, 0.6], ["popsicle", 430, 1470],
  ["reader", 860, 1490, 0, 0.8], ["lens", 1120, 1500, 0, 1.6], ["fir", 1172, 1576], ["shrimp", 1262, 1530], ["popsicle", 1080, 1590, 10],
  ["sparkle", 1094, 1642], ["toadstool", 1290, 1640], ["rocket", 1138, 1710], ["cursor", 1062, 1688], ["peace", 1232, 1710],
  ["photo", 1010, 1755], ["picture", 1032, 1812], ["square", 1276, 1775, 10, 2.2], ["sparkle", 1070, 1830, 10, 1.4], ["carrot", 1150, 1810, 40],
  ["chili", 1250, 1830, 20], ["rocket", 15, 1710], ["flower", 460, 1870, 10], ["pineapple", 320, 1870, 70], ["popsicle", 900, 1880],
  ["sparkle", 1125, 1868], ["ball", 12, 1935], ["pineapple", 80, 1895], ["palm", 165, 1905], ["cloud", 172, 1940, 0, 0.8], ["bowl", 175, 2020],
  ["carrot", 160, 2100, -10], ["shrimp", 60, 2010, 20, 0.8], ["flower", 225, 1965, 0, 0.8], ["melon", 60, 2090, 10, 0.7], ["sparkle", 228, 2060],
  ["bun", 415, 2150], ["asterisk", 670, 2125, 10], ["ball", 1022, 2130], ["cloud", 875, 2125, 0, 0.5], ["cloud", 1118, 2178, 0, 0.7],
  ["wing", 950, 2150], ["shell", 770, 2150, 20, 0.8], ["bag", 590, 2192], ["shop", 940, 2195], ["tree", 1045, 2270], ["popsicle", 460, 2170],
  ["hex", 832, 2233], ["cross", 888, 2242, 45], ["square", 923, 2290, 10, 1.6], ["apple", 810, 2300], ["rockHand", 860, 2315, 20, 0.7],
  ["flower", 780, 2235, 10, 0.6], ["lock", 950, 2345, 0, 0.8], ["cursor", 895, 2350, 80], ["bar", 355, 2345, -15, 1.8], ["shell", 650, 2360],
  ["rocket", 480, 2345, 10, 0.7], ["bar", 232, 2396], ["bar", 240, 2443, 0, 0.9], ["icepop", 125, 2435, 0, 1.1], ["sparkle", 192, 2443],
];

const Doodles = () => (
  <Wallpaper aria-hidden="true">
    <defs>
      <g id="doodles" fill={color.wall} stroke={color.doodle} strokeWidth="2.6" strokeLinejoin="round" strokeLinecap="round">
        {dots.map(([x, y, r], i) => (
          <circle key={i} cx={x} cy={y} r={r} />
        ))}
        {doodles.map(([name, x, y, turn = 0, size = 1], i) => (
          <path key={i} d={shapes[name]} transform={`translate(${x} ${y}) rotate(${turn}) scale(${size})`} />
        ))}
        <g transform="translate(62 262) rotate(-12)" fill="none">
          <path d={calendarDate} strokeWidth="12" />
          <path d={calendarDate} strokeWidth="7" stroke={color.wall} />
        </g>
      </g>
      <pattern id="wall" width="1123" height="1997" patternUnits="userSpaceOnUse">
        <use href="#doodles" />
        <use href="#doodles" x="-1123" />
        <use href="#doodles" y="-1997" />
        <use href="#doodles" x="-1123" y="-1997" />
      </pattern>
    </defs>
    <rect width="100%" height="100%" fill="url(#wall)" />
  </Wallpaper>
);

/* ---------- screen ---------- */

export default function App() {
  return (
    <Screen>
      <GlobalStyle />
      <Doodles />
      <Header>
        <BackButton aria-label="Back, 68 unread">
          <svg width="35" height="57" viewBox="0 0 35 57" fill="none" stroke="currentColor" strokeWidth="7" strokeLinecap="round" strokeLinejoin="round">
            <path d="M30 4 L5 28 L30 53" />
          </svg>
          68
        </BackButton>
        <Avatar>
          <svg width="34" height="38" viewBox="0 0 34 38" fill="#5c46d6">
            <circle cx="17" cy="9" r="8.500" />
            <path d="M0 37 C0 27 6 21 17 21 C28 21 34 27 34 37 Z" />
          </svg>
        </Avatar>
        <Title>1723 &amp; 1811</Title>
        <HeaderActions>
          <IconButton aria-label="Video call">
            <svg width="68" height="46" viewBox="0 0 68 46" fill="none" stroke="currentColor" strokeWidth="4" strokeLinejoin="round">
              <rect x="3" y="3" width="45" height="41" rx="8" />
              <path d="M48 18 L61 7 Q65 5 65 9 V37 Q65 41 61 39 L48 28" />
            </svg>
          </IconButton>
          <IconButton aria-label="Call">
            <svg width="54" height="54" viewBox="0 0 54 54" fill="none" stroke="currentColor" strokeWidth="4" strokeLinejoin="round">
              <path d="M7 4 C10 2 13 2 15 5 L20 13 C21 15 21 16 20 17 L17 22 C16 24 24 33 30 37 C31 38 32 37 33 36 L37 34 C38 33 40 33 41 34 L50 40 C52 42 52 44 50 46 C46 51 39 53 30 49 C16 42 4 28 3 16 C2 10 4 6 7 4 Z" />
            </svg>
          </IconButton>
        </HeaderActions>
      </Header>

      <Chat>
        <MessageList>
          <Row $side="out" $gap={0}>
            <Bubble $side="out" $width={955}>
              <Quote>
                You recently placed an order on activitysphere.pk
                <br />
                High waisted flare leggings (M)
              </Quote>
              <Text>Maam Did you receive your first order?</Text>
              <Meta side="out" time="18:47" />
              <Tail side="out" />
            </Bubble>
          </Row>

          <Row $side="in">
            <Bubble $side="in" $width={993}>
              <Text>Yes i did just now ..and seeing the quality I placed another other</Text>
              <Meta side="in" time="18:48" />
            </Bubble>
          </Row>

          <Row $side="in" $gap={13}>
            <Bubble $side="in" $width={825}>
              <Text>
                Really happy to see the quality <RaisedHands />
              </Text>
              <Meta side="in" time="18:49" />
            </Bubble>
          </Row>

          <Row $side="in">
            <StickerBox>
              <ThumbsUp width={166} height={179} />
            </StickerBox>
            <TimePill>
              <time>18:49</time>
            </TimePill>
          </Row>

          <Row $side="out" $gap={54}>
            <Bubble $side="out" $width={1006} $selected>
              <Text>Thank you so much maam</Text>
              <Text>
                If you are comfortable then kindly give us <Mark $pad={14}>review</Mark> on our website
              </Text>
              <Text>
                Thanks Alot
                <Smile />
              </Text>
              <Meta side="out" time="18:49" />
              <Tail side="out" />
            </Bubble>
            <Reaction aria-label="Reaction">
              <ThumbsUp width={41} height={45} />
            </Reaction>
          </Row>

          <Row $side="in">
            <Bubble $side="in" $width={1005}>
              <Text>
                Yeah and promote ur page to my Islamabad gym
                <br />
                group too
              </Text>
              <Meta side="in" time="18:50" />
            </Bubble>
          </Row>

          <Row $side="in" $gap={13}>
            <Bubble $side="in" $width={927}>
              <Text>
                Very difficult to find such quality gymwear in
                <br />
                psk8stsn
              </Text>
              <Meta side="in" time="18:50" />
              <Tail side="in" />
            </Bubble>
          </Row>

          <Row $side="out">
            <Bubble $side="out" $width={1009}>
              <VoiceBody>
                <VoiceAvatar />
                <Player>
                  <Controls>
                    <IconButton aria-label="Play">
                      <svg width="46" height="52" viewBox="0 0 46 52" fill="#566b55" stroke="#566b55" strokeWidth="5" strokeLinejoin="round">
                        <path d="M3 3 L43 26 L3 49 Z" />
                      </svg>
                    </IconButton>
                    <Track>
                      <Waveform />
                      <Seek type="range" min={0} max={56} defaultValue={0} aria-label="Position" />
                    </Track>
                  </Controls>
                  <VoiceFoot>
                    <span>0:56</span>
                    <FootMeta>
                      <time>18:52</time>
                      <Ticks />
                    </FootMeta>
                  </VoiceFoot>
                </Player>
              </VoiceBody>
              <Tail side="out" />
            </Bubble>
            <Reaction aria-label="Reaction">
              <ThumbsUp width={41} height={45} />
            </Reaction>
          </Row>

          <Row $side="in">
            <Bubble $side="in" $width={718}>
              <Text>
                Sent my <Mark $pad={10}>review</Mark> in ur inbox ...
              </Text>
              <Meta side="in" time="18:53" />
              <Tail side="in" />
            </Bubble>
          </Row>

          <Row $side="out">
            <Bubble $side="out" $width={996} $tall>
              <Text>
                <Link href="https://activitysphere.pk/products/high-waisted-">https://activitysphere.pk/products/high-waisted-</Link>
              </Text>
            </Bubble>
          </Row>
        </MessageList>
        <ScrollDown aria-label="Scroll to latest">
          <svg width="40" height="24" viewBox="0 0 40 24" fill="none" stroke="currentColor" strokeWidth="5" strokeLinecap="round" strokeLinejoin="round">
            <path d="M4 4 L20 20 L36 4" />
          </svg>
        </ScrollDown>
      </Chat>
      <Composer />
    </Screen>
  );
}
